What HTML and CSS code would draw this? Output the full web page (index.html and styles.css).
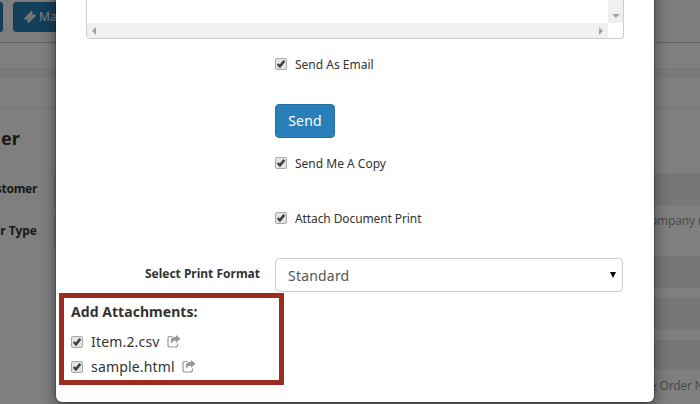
FILE: index.html
```html
<!DOCTYPE html>
<html lang="en">
<head>
<meta charset="utf-8">
<title>Send Email</title>
<link rel="stylesheet" href="styles.css">
</head>
<body>
<svg class="defs" aria-hidden="true">
  <symbol id="check" viewBox="0 0 12 12">
    <rect x=".5" y=".5" width="11" height="11" rx="1.500" fill="#e4e4e4" stroke="#a8a8a8"/>
    <path d="M2.700 6 4.900 8.300 9.300 2.900" fill="none" stroke="#404040" stroke-width="2.500"/>
  </symbol>
  <symbol id="share" viewBox="0 0 14 13">
    <path d="M5.500 1.500H3Q1 1.500 1 3.500V10Q1 12 3 12H8.500Q10.500 12 10.500 10V8.500" fill="none" stroke="#999" stroke-width="1.200"/>
    <path d="M9 0 13.500 3.800 9 7.700V5.800Q5.500 5.500 4.300 8.800 2 1.800 9 1.800Z" fill="#999"/>
  </symbol>
</svg>
<div class="page">
  <div class="toolbar">
    <span class="btn btn-cut"></span>
    <span class="btn btn-make">
      <svg class="ticket" viewBox="0 0 12 12"><path d="M0 7.500 7.500 0 8.700 1.200A1.200 1.200 0 0 0 10.700 3.200L12 4.500 4.500 12 3.300 10.800A1.200 1.200 0 0 0 1.300 8.800Z" fill="#fff"/><path d="M3 7.500 7.500 3 9 4.500 4.500 9Z" fill="none" stroke="#2980b9" stroke-width=".5"/></svg>
      Make</span>
  </div>
  <div class="band"></div>
  <div class="gap"></div>
  <div class="head"></div>
  <div class="form">
    <div class="left">
      <h3>er</h3>
      <div class="row"><b class="tight">stomer</b><i></i></div>
      <div class="row"><b>r Type</b><i></i></div>
    </div>
    <div class="right">
      <div class="field f1"></div>
      <div class="help h1">ompany n</div>
      <div class="field f2"></div>
      <div class="field f2"></div>
      <div class="field f3"></div>
      <div class="help">e Order N</div>
    </div>
  </div>
</div>
<div class="backdrop"></div>
<div class="dialog">
  <div class="editor">
    <div class="canvas"></div><div class="vbar"><span class="down"></span></div>
    <div class="hbar"><span class="prev"></span><span class="next"></span></div><div></div>
  </div>
  <div class="option o1"><svg class="box"><use href="#check"/></svg>Send As Email</div>
  <button class="send">Send</button>
  <div class="option o2"><svg class="box"><use href="#check"/></svg>Send Me A Copy</div>
  <div class="option o3"><svg class="box"><use href="#check"/></svg>Attach Document Print</div>
  <div class="format">
    <b>Select Print Format</b>
    <div class="select"><span>Standard</span><span class="caret"></span></div>
  </div>
  <div class="attachments">
    <h4>Add Attachments:</h4>
    <div class="file"><svg class="box"><use href="#check"/></svg>Item.2.csv<svg class="share"><use href="#share"/></svg></div>
    <div class="file"><svg class="box"><use href="#check"/></svg>sample.html<svg class="share"><use href="#share"/></svg></div>
  </div>
</div>
<div class="highlight"></div>
</body>
</html>
```
FILE: styles.css
```css
* { box-sizing: border-box; }
body { margin: 0; width: 700px; height: 404px; overflow: hidden; position: relative; font-family: "Noto Sans", sans-serif; font-size: 12px; color: #333; background: #fff; }
.defs { position: absolute; width: 0; height: 0; }
.page { height: 404px; overflow: hidden; }
.toolbar { height: 43px; background: #fafafa; border-bottom: 1px solid #c4c4c4; display: flex; gap: 10px; padding-top: 2px; }
.btn { height: 30px; background: #2980b9; border: 1px solid #2472a4; border-radius: 3px; color: #fff; line-height: 28px; }
.btn-cut { width: 3px; border-left: 0; border-radius: 0 3px 3px 0; }
.btn-make { width: 90px; padding-left: 10px; display: flex; align-items: center; gap: 3px; }
.ticket { width: 12px; height: 12px; }
.band { height: 26px; border-bottom: 1px solid #ebebeb; }
.gap { height: 9px; background: #f5f5f5; }
.head { height: 31px; border-bottom: 1px solid #e9e9e9; }
.form { display: flex; justify-content: space-between; }
.left { width: 300px; }
.left h3 { margin: 17px 0 22px 1px; font-size: 18px; line-height: 25px; }
.row { display: flex; gap: 16px; height: 32px; margin-bottom: 10px; line-height: 31px; }
.row b { width: 37px; display: flex; justify-content: flex-end; white-space: pre; }
.row .tight { letter-spacing: -.3px; }
.row i { flex: 1; background: #eee; }
.right { width: 50px; padding-top: 64px; }
.field { height: 32px; background: #eee; margin-bottom: 10px; }
.f1 { margin-bottom: 7px; }
.f3 { height: 30px; margin-bottom: 7px; }
.help { height: 18px; line-height: 18px; color: #999; white-space: nowrap; letter-spacing: -.2px; }
.h1 { margin-bottom: 26px; }
.backdrop { position: absolute; inset: 0; background: rgba(0,0,0,.5); }
.dialog { position: absolute; left: 56px; top: -20px; width: 598px; height: 422px; padding: 20px 0 0; background: #fff; border-radius: 6px; box-shadow: 0 0 0 1px rgba(0,0,0,.2), 0 5px 15px rgba(0,0,0,.5); }
.editor { width: 538px; height: 39px; margin-left: 30px; border: 1px solid #ccc; border-top: 0; border-radius: 0 0 4px 4px; display: grid; grid-template-columns: 1fr 15px; grid-template-rows: 23px 15px; overflow: hidden; }
.vbar, .hbar { background: #f0f0f0; display: flex; }
.vbar { justify-content: center; align-items: flex-end; padding-bottom: 5px; }
.hbar { align-items: center; justify-content: space-between; padding: 0 5px; }
.down { border: 4px solid transparent; border-top-color: #a3a3a3; border-bottom: 0; }
.prev { border: 4px solid transparent; border-right-color: #a3a3a3; border-left: 0; }
.next { border: 4px solid transparent; border-left-color: #a3a3a3; border-right: 0; }
.option { margin-left: 219px; height: 18px; display: flex; align-items: center; gap: 8px; }
.box { width: 12px; height: 12px; flex: none; }
.o1 { margin-top: 16px; }
.send { display: block; margin: 31px 0 0 219px; width: 60px; height: 34px; padding: 0 0 2px; border: 1px solid #2472a4; border-radius: 4px; background: #2980b9; color: #fff; font: 14px "Noto Sans", sans-serif; letter-spacing: .2px; }
.o2 { margin-top: 16px; }
.o3 { margin-top: 37px; letter-spacing: -.1px; }
.format { display: flex; margin-top: 31px; }
.format b { width: 204px; text-align: right; line-height: 32px; margin-right: 15px; }
.select { width: 348px; height: 34px; border: 1px solid #ccc; border-radius: 4px; padding: 0 6px 0 12px; display: flex; align-items: center; justify-content: space-between; font-size: 14px; color: #555; letter-spacing: .2px; }
.caret { border: 3px solid transparent; border-top: 6px solid #000; border-bottom: 0; }
.attachments { margin: 10px 0 0 15px; font-size: 14px; }
.attachments h4 { margin: 0 0 7px; font-size: 14px; line-height: 20px; letter-spacing: .05px; }
.file { height: 25px; display: flex; align-items: center; letter-spacing: .17px; }
.file .box { margin-right: 8px; }
.share { width: 14px; height: 13px; margin-left: 7px; margin-bottom: 1px; }
.highlight { position: absolute; left: 59px; top: 293px; width: 225px; height: 92px; border: 5px solid #9c2b22; }
```
